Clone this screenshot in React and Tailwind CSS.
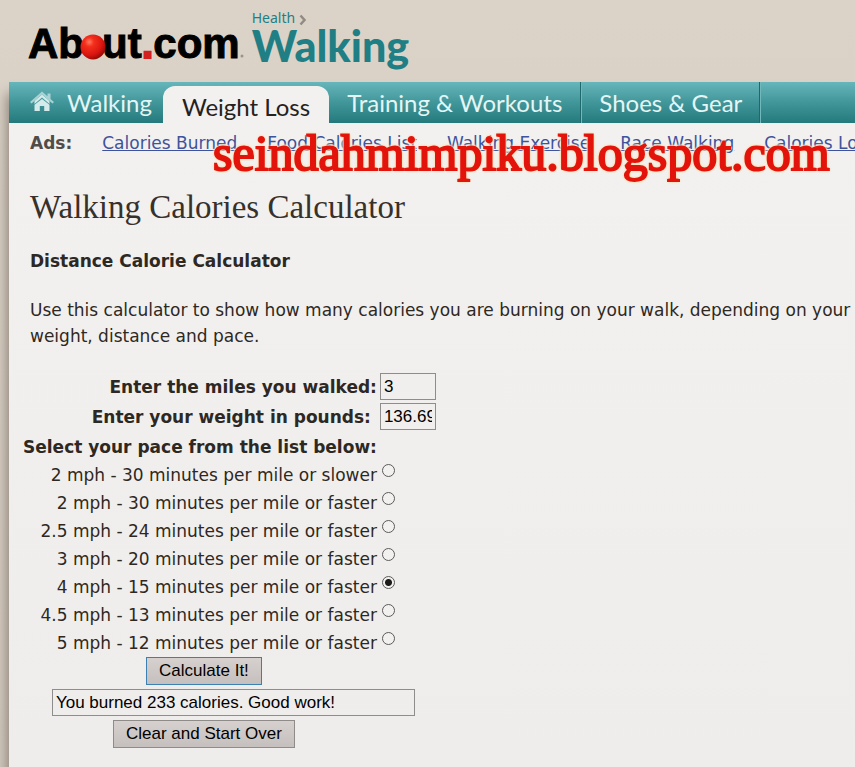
import { useState } from "react";

const ads = ["Calories Burned", "Food Calories List", "Walking Exercise", "Race Walking", "Calories Loss"];

const paces = [
  "2 mph - 30 minutes per mile or slower",
  "2 mph - 30 minutes per mile or faster",
  "2.5 mph - 24 minutes per mile or faster",
  "3 mph - 20 minutes per mile or faster",
  "4 mph - 15 minutes per mile or faster",
  "4.5 mph - 13 minutes per mile or faster",
  "5 mph - 12 minutes per mile or faster",
];

const field = "h-[27px] border border-[#8f8d8b] bg-transparent px-[3px] font-['Liberation_Sans',sans-serif] text-[17px] text-black outline-none";
const button = "h-7 border bg-linear-to-b from-[#d6d1ce] to-[#c5c0bd] px-3 font-['Liberation_Sans',sans-serif] text-[17px] leading-5 text-black";

function Logo() {
  return (
    <a href="#about" aria-label="About.com" className="flex items-center font-['Liberation_Sans',sans-serif] text-[42px] font-bold leading-[44px] text-black">
      <span className="[-webkit-text-stroke:1px_black]">Ab</span>
      <svg viewBox="0 0 26 26" className="z-10 -mx-1 mt-1.5 size-[26px]" aria-hidden="true">
        <defs>
          <radialGradient id="ball" cx="0.35" cy="0.3" r="0.75">
            <stop offset="0" stopColor="#ff7a60" />
            <stop offset="0.25" stopColor="#f52f1c" />
            <stop offset="0.7" stopColor="#d91510" />
            <stop offset="1" stopColor="#8d0906" />
          </radialGradient>
        </defs>
        <circle cx="13" cy="13" r="12.5" fill="url(#ball)" />
      </svg>
      <span className="[-webkit-text-stroke:1px_black]">ut</span>
      <span className="text-[#d42020] [-webkit-text-stroke:2px_#d42020]">.</span>
      <span className="[-webkit-text-stroke:1px_black]">com</span>
      <svg viewBox="0 0 4 4" className="mt-6 size-1" aria-hidden="true">
        <circle cx="2" cy="2" r="1.5" fill="#9b948b" />
      </svg>
    </a>
  );
}

function HomeIcon() {
  return (
    <svg viewBox="0 0 26 22" className="-mt-1 h-[22px] w-[26px]" aria-hidden="true">
      <path d="M13 9 5.500 14.800V21h5.300v-5h4.400v5h5.300v-6.200z" fill="#d5eaeb" />
      <path d="M5.500 14 13 7.500l7.500 6.500v-3L13 4.500 5.500 11z" fill="#d5eaeb" />
      <path d="M13 1.500 1 12l1.500 1.500L13 4.500l10.500 9L25 12l-3.500-3V3.500h-3v2.800z" fill="#a9d2d4" />
    </svg>
  );
}

function Nav() {
  return (
    <nav className="flex h-[41px] overflow-hidden whitespace-nowrap bg-linear-to-b from-[#66b6bb] via-[#419699] to-[#237a7c] font-['Lato',sans-serif] text-2xl text-[#e4f5f5]">
      <a href="#walking" className="flex items-center gap-3 pl-5 pr-[11px]">
        <HomeIcon />
        Walking
      </a>
      <a href="#weight-loss" className="mt-1 flex items-center rounded-t-xl bg-[#f2f1f0] px-[19px] pt-1 text-[#252220]">Weight Loss</a>
      <a href="#training" className="flex items-center border-r border-[#1f686b] px-[18px]">Training &amp; Workouts</a>
      <a href="#shoes" className="flex items-center border-l border-r border-l-[#72b7ba] border-r-[#1f686b] px-[17px]">Shoes &amp; Gear</a>
      <span className="border-l border-[#72b7ba]" />
    </nav>
  );
}

function Calculator() {
  const [miles, setMiles] = useState("3");
  const [pounds, setPounds] = useState("136.69");
  const [pace, setPace] = useState(4);
  const [result, setResult] = useState("You burned 233 calories. Good work!");

  const calculate = (e) => {
    e.preventDefault();
    const calories = Math.round(Number(miles) * Number(pounds) * 0.568);
    setResult(`You burned ${calories} calories. Good work!`);
  };

  const clear = () => {
    setMiles("");
    setPounds("");
    setPace(null);
    setResult("");
  };

  return (
    <form onSubmit={calculate} className="-ml-[7px] mt-6 grid w-fit grid-cols-[auto_auto] gap-x-[3px] whitespace-nowrap">
      <label htmlFor="miles" className="text-right font-bold leading-[28px]">Enter the miles you walked:</label>
      <input id="miles" value={miles} onChange={(e) => setMiles(e.target.value)} className={`${field} mb-[3px] w-14`} />
      <label htmlFor="pounds" className="pr-1.5 text-right font-bold leading-[28px]">Enter your weight in pounds:</label>
      <input id="pounds" value={pounds} onChange={(e) => setPounds(e.target.value)} className={`${field} mb-[3px] w-14`} />
      <p className="col-start-1 text-right font-bold leading-[28px]">Select your pace from the list below:</p>
      {paces.map((text, i) => (
        <div key={text} className="col-span-2 grid grid-cols-subgrid">
          <label htmlFor={`pace-${i}`} className="text-right leading-[28px]">{text}</label>
          <input
            id={`pace-${i}`}
            type="radio"
            name="pace"
            checked={pace === i}
            onChange={() => setPace(i)}
            className="ml-0.5 mt-[3px] size-[13px] appearance-none rounded-full border border-[#5c5a58] bg-[#f2f1f0] checked:bg-[radial-gradient(circle,#1c1a19_3px,transparent_4px)]"
          />
        </div>
      ))}
      <button type="submit" className={`${button} col-start-1 ml-2 justify-self-center border-[#3c7fb1]`}>Calculate It!</button>
      <input aria-label="Result" readOnly value={result} className={`${field} col-span-2 my-1 ml-2 w-[363px] justify-self-center`} />
      <button type="button" onClick={clear} className={`${button} col-start-1 ml-2 justify-self-center border-[#8f8b88]`}>Clear and Start Over</button>
    </form>
  );
}

export default function App() {
  return (
    <div className="min-h-screen overflow-hidden bg-linear-to-b from-[#dbd3c8] to-[#d3cac0] pl-[9px] font-['DejaVu_Sans',sans-serif] text-[17px] text-[#2e2823]">
      <header className="flex h-[82px] items-start pl-[19px]">
        <div className="pt-[22px]">
          <Logo />
        </div>
        <div className="pl-2 pt-2 text-[#1f7f84]">
          <a href="#health" className="flex items-center gap-1 font-['Noto_Sans',sans-serif] text-sm leading-5">
            Health
            <svg viewBox="0 0 8 12" className="mt-1 h-3 w-2" fill="none" stroke="#918b84" strokeWidth="2.500" aria-hidden="true">
              <path d="m1.500 1.500 4 4.500-4 4.500" />
            </svg>
          </a>
          <a href="#walking" className="block font-['Lato',sans-serif] text-[43px] font-black leading-9">Walking</a>
        </div>
      </header>

      <div className="shadow-[-2px_12px_12px_#8b8075]">
        <Nav />
        <main className="relative min-h-[calc(100vh-123px)] bg-linear-to-b from-[#f2f1f0] to-[#efedec] pb-5 pl-[21px]">
          <div className="flex gap-[30px] overflow-hidden whitespace-nowrap pt-2 leading-6">
            <strong className="text-[#514c48]">Ads:</strong>
            {ads.map((ad) => (
              <a key={ad} href="#ads" className="text-[#3e539c] underline">{ad}</a>
            ))}
          </div>
          <p className="pointer-events-none absolute left-[204px] top-0 whitespace-nowrap font-['Liberation_Serif',serif] text-[50px] leading-[60px] text-[#e3140c] [-webkit-text-stroke:2px_#e3140c] [text-shadow:0_0_3px_#fbdfb0,2px_0_2px_#fbe3bd,-2px_0_2px_#fbe3bd,0_2px_2px_#fbe3bd,0_-2px_2px_#fbe3bd]">
            seindahmimpiku.blogspot.com
          </p>

          <h1 className="mt-8 font-['Liberation_Serif',serif] text-[33px] leading-10 text-[#38302a]">Walking Calories Calculator</h1>
          <h2 className="mt-[22px] font-bold leading-6">Distance Calorie Calculator</h2>
          <p className="mt-6 leading-[26px]">
            Use this calculator to show how many calories you are burning on your walk, depending on your weight, distance and pace.
          </p>
          <Calculator />
        </main>
      </div>
    </div>
  );
}
